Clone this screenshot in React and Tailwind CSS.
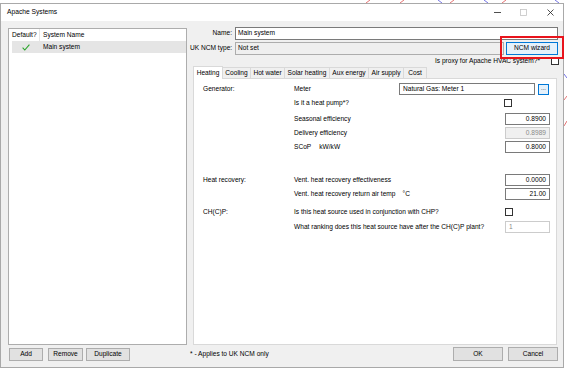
import React from "react";

const Input = ({ value, disabled, className = "", align = "right" }) => (
  <div
    className={`h-[12px] w-[45px] flex items-center border ${
      disabled ? "border-[#cccccc] bg-[#f0f0f0] text-[#8a8a8a]" : "border-[#7a7a7a] bg-white text-black"
    } ${align === "right" ? "justify-end pr-[3px]" : "justify-start pl-[3px]"} ${className}`}
  >
    {value}
  </div>
);

const Check = ({ className = "" }) => (
  <div className={`h-[8px] w-[8px] border border-[#333333] bg-white ${className}`} />
);

const Row = ({ label, children, right, className = "" }) => (
  <div className={`flex h-[12px] items-center ${className}`}>
    <div className="w-[91px] shrink-0">{label}</div>
    <div className="flex-1 flex items-center">{children}</div>
    {right}
  </div>
);

const Btn = ({ children, className = "" }) => (
  <div
    className={`flex items-center justify-center border border-[#adadad] bg-[#e1e1e1] ${className}`}
  >
    {children}
  </div>
);

export default function App() {
  const tabs = [
    ["Heating", 30],
    ["Cooling", 28],
    ["Hot water", 34],
    ["Solar heating", 45],
    ["Aux energy", 39],
    ["Air supply", 35],
    ["Cost", 23],
  ];
  return (
    <div className="relative w-[567px] h-[371px] overflow-hidden bg-white text-[6.6px] leading-none text-black font-['Liberation_Sans',Arial,sans-serif]">
      <svg className="absolute left-0 top-0" width="567" height="371">
        <g strokeWidth="0.8" fill="none">
          <line x1="366" y1="3" x2="370" y2="0" stroke="#e05050" />
          <line x1="400" y1="3" x2="404" y2="0" stroke="#e05050" />
          <line x1="438" y1="0" x2="442" y2="3" stroke="#5050e0" />
          <line x1="450" y1="3" x2="454" y2="0" stroke="#e05050" />
          <line x1="484" y1="0" x2="488" y2="3" stroke="#5050e0" />
          <line x1="502" y1="3" x2="506" y2="0" stroke="#e05050" />
          <line x1="555" y1="0" x2="559" y2="3" stroke="#5050e0" />
          <line x1="564" y1="74" x2="567" y2="78" stroke="#5050e0" />
          <line x1="564" y1="100" x2="567" y2="96" stroke="#e05050" />
          <line x1="564" y1="126" x2="567" y2="121" stroke="#e05050" />
        </g>
      </svg>
      <div className="relative mt-[3px] w-[564px] h-[365px] border border-[#a9a9a9] bg-[#f0f0f0] flex flex-col">
        {/* Title bar */}
        <div className="h-[17px] shrink-0 bg-white flex items-center justify-between pl-[6px] pr-[9px]">
          <span className="text-[6.7px]">Apache Systems</span>
          <div className="flex items-center">
            <svg width="7" height="7" viewBox="0 0 7 7">
              <line x1="0" y1="3.5" x2="7" y2="3.5" stroke="#222" strokeWidth="0.8" />
            </svg>
            <svg width="7" height="7" viewBox="0 0 7 7" className="ml-[19px]">
              <rect x="0.5" y="0.5" width="6" height="6" fill="none" stroke="#c4c4c4" strokeWidth="0.8" />
            </svg>
            <svg width="7" height="7" viewBox="0 0 7 7" className="ml-[20px]">
              <path d="M0.5 0.5 L6.5 6.5 M6.5 0.5 L0.5 6.5" stroke="#222" strokeWidth="0.8" />
            </svg>
          </div>
        </div>
        {/* Body */}
        <div className="flex-1 flex pl-[7px] pr-[5px] pt-[6px]">
          {/* Left column */}
          <div className="w-[179px] shrink-0 flex flex-col">
            <div className="mt-[1px] h-[317px] border border-[#adadad] bg-white">
              <div className="flex h-[12px] items-center pl-[3px]">
                <div className="w-[28px] h-full flex items-center border-r border-[#e5e5e5]">Default?</div>
                <div className="pl-[3px]">System Name</div>
              </div>
              <div className="flex h-[12px] items-center ml-[3px] bg-[#e5e5e5]">
                <div className="w-[28px] flex justify-center">
                  <svg width="8" height="7" viewBox="0 0 8 7">
                    <path d="M0.6 3.6 L2.8 6 L7.4 0.6" fill="none" stroke="#2aa52a" strokeWidth="1.1" />
                  </svg>
                </div>
                <div className="pl-[3px]">Main system</div>
              </div>
            </div>
            <div className="mt-[3px] flex">
              <Btn className="w-[34px] h-[13px] ml-[1px]">Add</Btn>
              <Btn className="w-[35px] h-[13px] ml-[5px]">Remove</Btn>
              <Btn className="w-[44px] h-[13px] ml-[3px]">Duplicate</Btn>
            </div>
          </div>
          {/* Right column */}
          <div className="flex-1 ml-[3px] flex flex-col">
            <div className="flex h-[13px] items-center">
              <div className="w-[42px] text-right">Name:</div>
              <div className="ml-[3px] flex-1 h-full flex items-center border border-[#7a7a7a] bg-white pl-[2px]">
                Main system
              </div>
            </div>
            <div className="mt-[2px] flex h-[13px] items-center">
              <div className="w-[42px] text-right whitespace-nowrap">UK NCM type:</div>
              <div className="ml-[3px] flex-1 h-full flex items-center border border-[#adadad] bg-[#efefef] pl-[2px]">
                Not set
              </div>
              <div className="relative ml-[2px] w-[52px] h-full">
                <div className="w-full h-full flex items-center justify-center border border-[#0078d7] bg-[#e5f1fb]">
                  NCM wizard
                </div>
                <div className="absolute left-[-6px] top-[-6px] right-[-6px] bottom-[-4px] border-2 border-[#e8141c]" />
              </div>
            </div>
            <div className="mt-[2px] flex h-[8px] items-center justify-end">
              <span>Is proxy for Apache HVAC system?*</span>
              <Check className="ml-[11px] mr-[-1px]" />
            </div>
            {/* Tabs */}
            <div className="mt-[1px] flex items-end h-[12px] pl-[3px]">
              {tabs.map(([t, w], i) => (
                <div
                  key={t}
                  style={{ width: w }}
                  className={
                    i === 0
                      ? "relative z-10 h-[13px] mb-[-1px] flex items-center justify-center bg-white border border-b-0 border-[#d9d9d9]"
                      : `h-[11px] flex items-center justify-center bg-[#f0f0f0] border-t border-r border-[#d9d9d9]`
                  }
                >
                  {t}
                </div>
              ))}
            </div>
            <div className="ml-[3px] mr-[1px] h-[267px] border border-[#d9d9d9] bg-white pl-[9px] pr-[6px] pt-[4px] flex flex-col">
              <Row
                label="Generator:"
                right={
                  <div className="flex items-center">
                    <div className="w-[136px] h-[12px] flex items-center border border-[#7a7a7a] pl-[3px]">
                      Natural Gas: Meter 1
                    </div>
                    <div className="ml-[3px] w-[11px] h-[11px] flex items-center justify-center border border-[#0078d7] bg-[#e5f1fb] text-[6px] pb-[2px] mr-[1px]">
                      ...
                    </div>
                  </div>
                }
              >
                Meter
              </Row>
              <Row className="mt-[2px]" right={<div className="w-[45px]"><Check className="ml-[-1px]" /></div>}>
                Is it a heat pump*?
              </Row>
              <Row className="mt-[4px]" right={<Input value="0.8900" />}>
                Seasonal efficiency
              </Row>
              <Row className="mt-[2px]" right={<Input value="0.8989" disabled />}>
                Delivery efficiency
              </Row>
              <Row className="mt-[2px]" right={<Input value="0.8000" />}>
                <span>SCoP</span>
                <span className="ml-[8px]">kW/kW</span>
              </Row>
              <Row label="Heat recovery:" className="mt-[21px]" right={<Input value="0.0000" />}>
                Vent. heat recovery effectiveness
              </Row>
              <Row className="mt-[2px]" right={<Input value="21.00" />}>
                <span>Vent. heat recovery return air temp</span>
                <span className="ml-[7px]">°C</span>
              </Row>
              <Row label="CH(C)P:" className="mt-[6px]" right={<div className="w-[45px]"><Check /></div>}>
                Is this heat source used in conjunction with CHP?
              </Row>
              <Row
                className="mt-[3px]"
                right={
                  <div className="h-[12px] w-[45px] flex items-center border border-[#cccccc] bg-white text-[#8a8a8a] pl-[3px]">
                    1
                  </div>
                }
              >
                What ranking does this heat source have after the CH(C)P plant?
              </Row>
            </div>
            <div className="mt-[2px] flex h-[14px] items-center">
              <span className="flex-1">* - Applies to UK NCM only</span>
              <Btn className="w-[50px] h-[14px] border-[#0078d7]">OK</Btn>
              <Btn className="ml-[5px] w-[50px] h-[14px]">Cancel</Btn>
            </div>
          </div>
        </div>
      </div>
    </div>
  );
}
